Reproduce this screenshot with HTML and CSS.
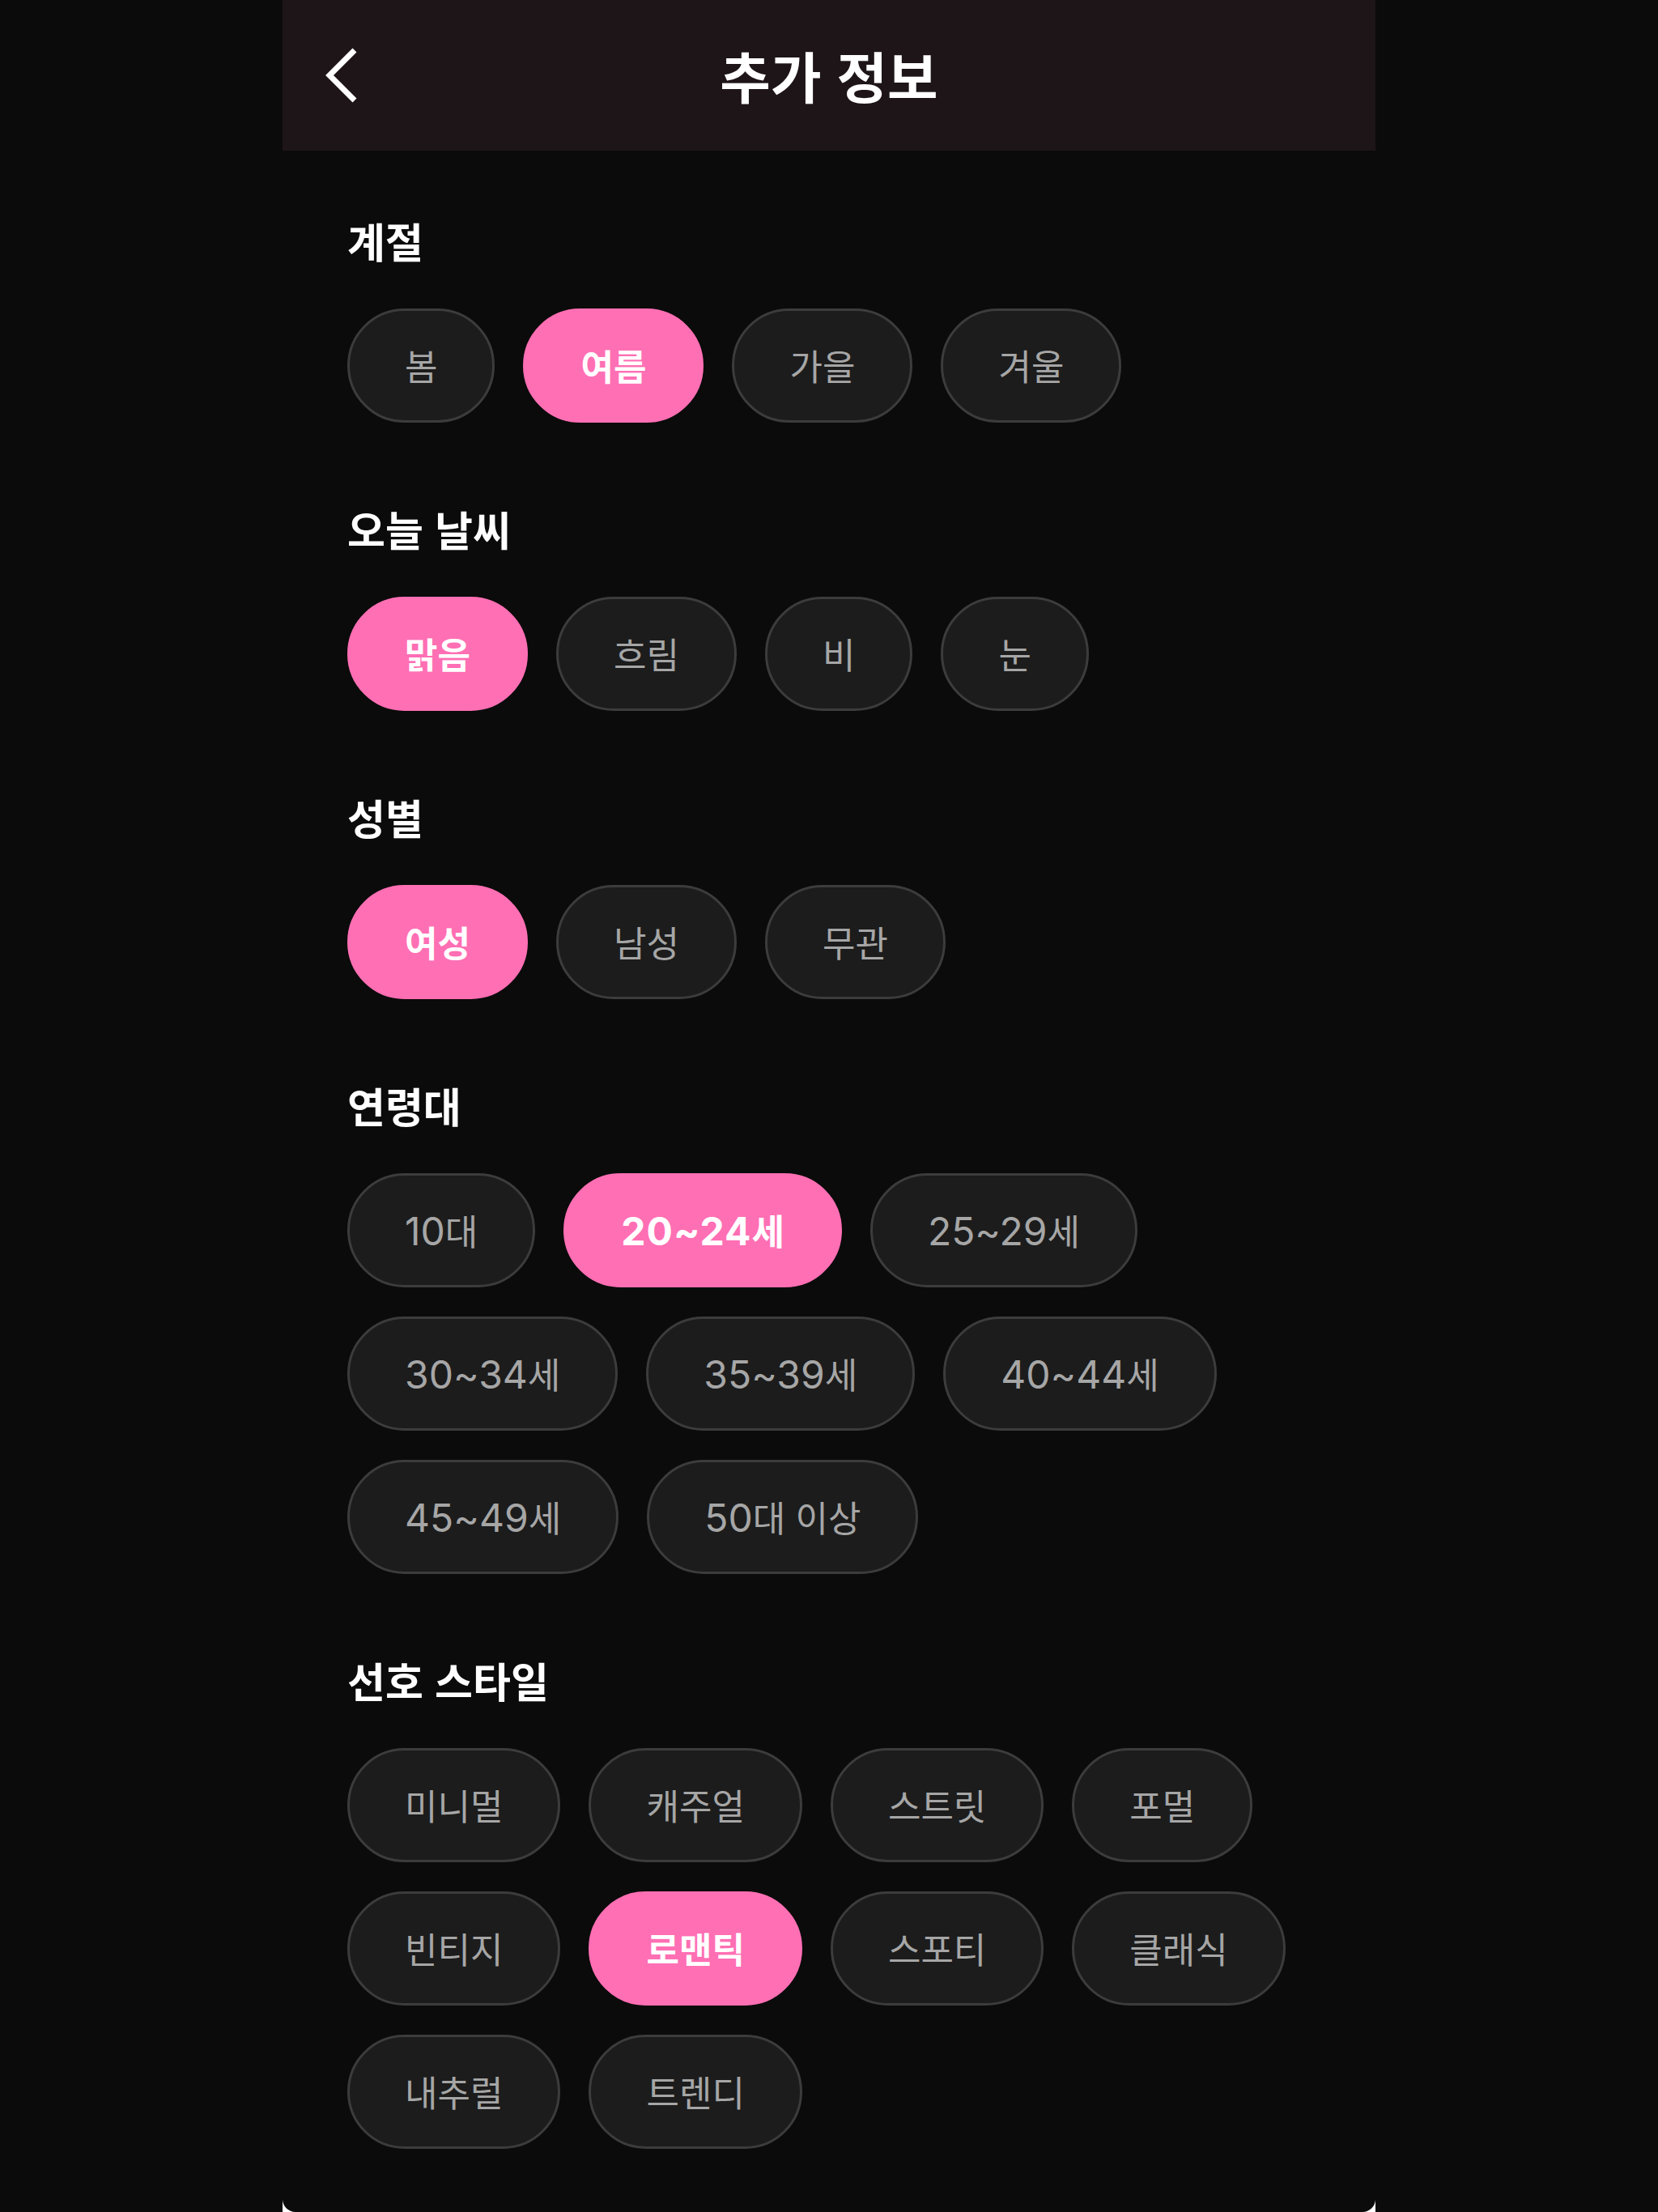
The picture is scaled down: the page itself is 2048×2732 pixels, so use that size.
FILE: index.html
```html
<!DOCTYPE html>
<html lang="ko">
<head>
    <meta charset="UTF-8">
    <meta name="viewport" content="width=device-width, initial-scale=1.0">
    <title>추가 정보</title>
    <link rel="stylesheet" href="styles.css">
</head>
<body>
    <div class="page">
        <div class="screen">
            <header class="topbar">
                <button type="button" class="back-btn" aria-label="뒤로">
                    <svg width="46" height="74" viewBox="0 0 46 74">
                        <path d="M38 6 L7 37 L38 68" fill="none" stroke="#fff" stroke-width="7"/>
                    </svg>
                </button>
                <h1>추가 정보</h1>
                <span></span>
            </header>

            <main class="content">
                <section class="group">
                    <h2>계절</h2>
                    <div class="chips">
                        <span class="chip">봄</span>
                        <span class="chip active">여름</span>
                        <span class="chip">가을</span>
                        <span class="chip">겨울</span>
                    </div>
                </section>

                <section class="group">
                    <h2>오늘 날씨</h2>
                    <div class="chips">
                        <span class="chip active">맑음</span>
                        <span class="chip">흐림</span>
                        <span class="chip">비</span>
                        <span class="chip">눈</span>
                    </div>
                </section>

                <section class="group">
                    <h2>성별</h2>
                    <div class="chips">
                        <span class="chip active">여성</span>
                        <span class="chip">남성</span>
                        <span class="chip">무관</span>
                    </div>
                </section>

                <section class="group">
                    <h2>연령대</h2>
                    <div class="chips">
                        <span class="chip"><span class="num">10</span>대</span>
                        <span class="chip active"><span class="num">20~24</span>세</span>
                        <span class="chip"><span class="num">25~29</span>세</span>
                        <span class="chip"><span class="num">30~34</span>세</span>
                        <span class="chip"><span class="num">35~39</span>세</span>
                        <span class="chip"><span class="num">40~44</span>세</span>
                        <span class="chip"><span class="num">45~49</span>세</span>
                        <span class="chip"><span class="num">50</span>대 이상</span>
                    </div>
                </section>

                <section class="group">
                    <h2>선호 스타일</h2>
                    <div class="chips">
                        <span class="chip">미니멀</span>
                        <span class="chip">캐주얼</span>
                        <span class="chip">스트릿</span>
                        <span class="chip">포멀</span>
                        <span class="chip">빈티지</span>
                        <span class="chip active">로맨틱</span>
                        <span class="chip">스포티</span>
                        <span class="chip">클래식</span>
                        <span class="chip">내추럴</span>
                        <span class="chip">트렌디</span>
                    </div>
                </section>
            </main>
        </div>
    </div>
</body>
</html>
```

FILE: styles.css
```css
body {
    margin: 0;
    background-color: #0b0b0b;
    font-family: "Noto Sans CJK KR", "Noto Sans", sans-serif;
    color: #fff;
}

.page {
    width: 1350px;
    margin: 0 auto;
    background-color: #fff;
}

.screen {
    background-color: #0b0b0b;
    border-radius: 0 0 16px 16px;
}

.topbar {
    height: 186px;
    background-color: #1e1518;
    display: grid;
    grid-template-columns: 1fr auto 1fr;
    align-items: center;
}

.back-btn {
    justify-self: start;
    margin-left: 51px;
    padding: 0;
    border: none;
    background: none;
    display: flex;
    cursor: pointer;
}

.topbar h1 {
    margin: 0;
    font-size: 68px;
    font-weight: 700;
    line-height: 1;
}

.content {
    padding: 78px 80px 78px;
    display: flex;
    flex-direction: column;
    gap: 98px;
}

.group h2 {
    margin: 0 0 50px;
    font-size: 51px;
    font-weight: 700;
    line-height: 67px;
}

.chips {
    display: flex;
    flex-wrap: wrap;
    gap: 36px 35px;
}

.chip {
    box-sizing: border-box;
    height: 141px;
    padding: 0 68px;
    border: 3px solid #3c3c3c;
    border-radius: 71px;
    background-color: #1c1c1c;
    color: #a6a6a6;
    font-size: 44px;
    line-height: 135px;
    text-align: center;
    white-space: nowrap;
}

.chip .num {
    font-family: "Inter", "Noto Sans", sans-serif;
    font-size: 48px;
    line-height: 1;
}

.chip.active {
    background-color: #ff6fb4;
    border-color: #ff6fb4;
    color: #fff;
    font-weight: 700;
}

.chip.active .num {
    letter-spacing: 1px;
}
```
